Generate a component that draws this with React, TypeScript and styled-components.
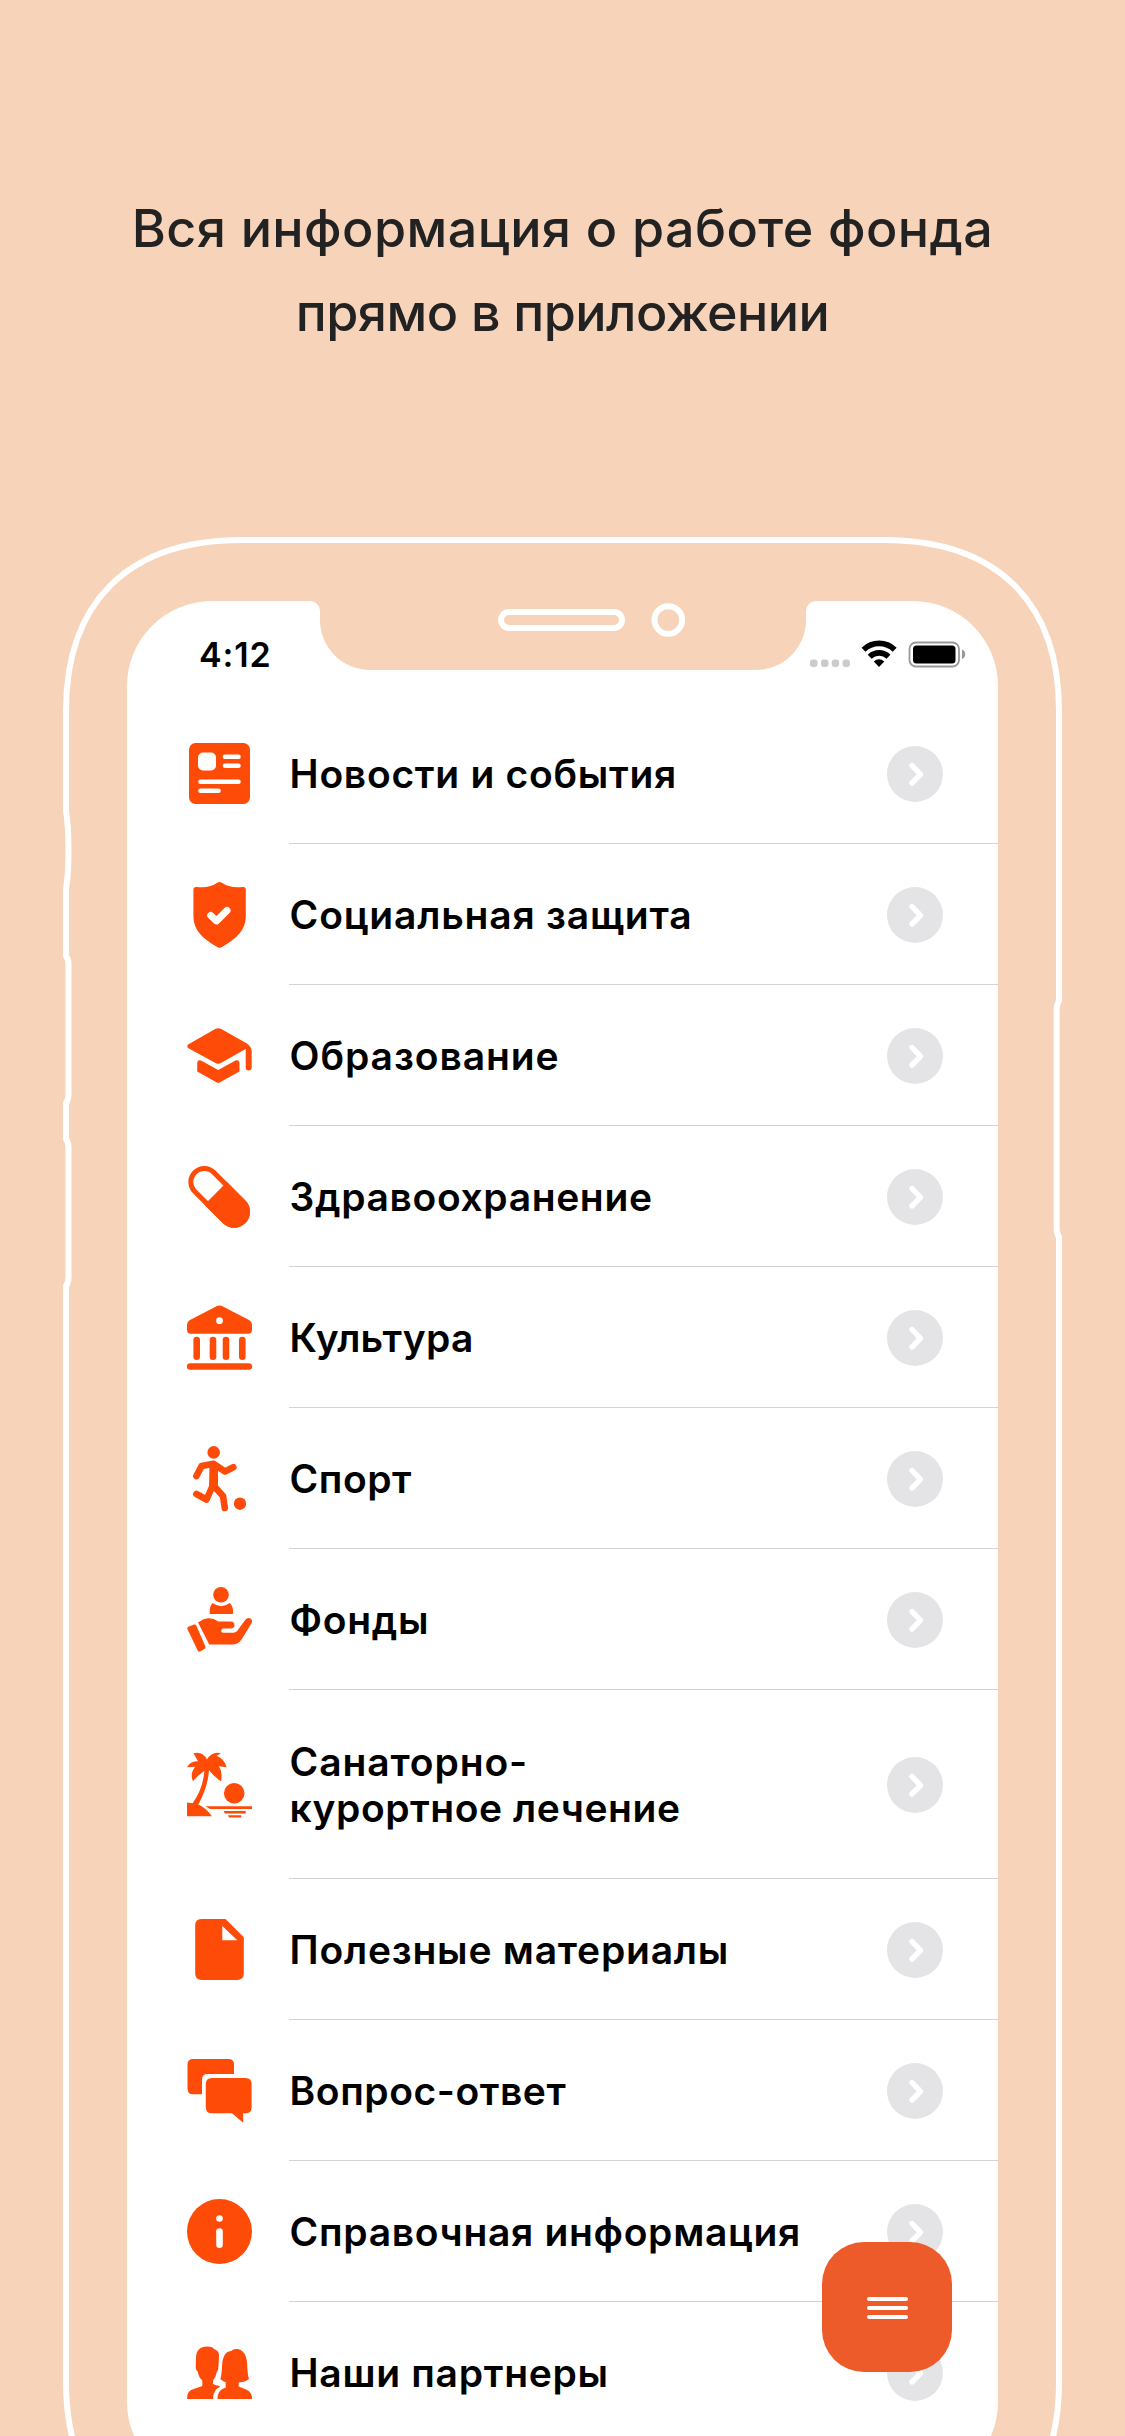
import React from "react";
import styled, { createGlobalStyle } from "styled-components";

const ORANGE = "#ff4b08";
const PEACH = "#f7d3b9";

const Global = createGlobalStyle`
  * { box-sizing: border-box; }
  html, body { margin: 0; padding: 0; background: ${PEACH}; }
`;

const Page = styled.main`
  width: 1125px;
  height: 2436px;
  overflow: hidden;
  background: ${PEACH};
  display: flex;
  flex-direction: column;
  font-family: Inter, "Liberation Sans", sans-serif;
`;

const Headline = styled.h1`
  margin: 0;
  height: 537px;
  padding-top: 187px;
  display: flex;
  flex-direction: column;
  align-items: center;
  color: #222;
  font-weight: 450;
  font-size: 52px;
  line-height: 84px;
`;

const HeadLine = styled.span<{ $spacing: number }>`
  white-space: nowrap;
  letter-spacing: ${(p) => p.$spacing}px;
`;

const Phone = styled.section`
  position: relative;
  height: 1899px;
  padding: 64px 127px 0;
`;

const Frame = styled.svg`
  position: absolute;
  inset: 0;
  pointer-events: none;
`;

const Screen = styled.div`
  position: relative;
  width: 871px;
  height: 1886px;
  background: #fff;
  border-radius: 85px;
  overflow: hidden;
`;

const Notch = styled.svg`
  position: absolute;
  left: 183px;
  top: -1px;
`;

const StatusBar = styled.header`
  height: 102px;
  padding: 35px 33px 0 72px;
  display: flex;
  justify-content: space-between;
`;

const Clock = styled.time`
  font-size: 34px;
  line-height: 38px;
  font-weight: 600;
  letter-spacing: 0.9px;
  color: #000;
`;

const List = styled.ul`
  list-style: none;
  margin: 0;
  padding: 0 0 0 60px;
`;

const Row = styled.li<{ $tall?: boolean }>`
  height: ${(p) => (p.$tall ? 189 : 141)}px;
  display: flex;
  align-items: center;
`;

const IconBox = styled.span`
  width: 102px;
  height: 66px;
  flex: none;

  svg {
    display: block;
  }
`;

const RowBody = styled.div`
  flex: 1;
  height: 100%;
  display: flex;
  align-items: center;
  justify-content: space-between;
  padding-right: 55px;
  border-bottom: 1px solid #d3d3d5;
`;

const Label = styled.span`
  display: flex;
  flex-direction: column;
  padding: 2px 0 0 0.6px;
`;

const LabelLine = styled.span<{ $spacing: number }>`
  font-size: 39px;
  line-height: 46.5px;
  font-weight: 600;
  color: #000;
  white-space: nowrap;
  letter-spacing: ${(p) => p.$spacing}px;
`;

const ChevronIcon = styled.svg`
  margin-top: 1px;
`;

const MenuButton = styled.button`
  position: absolute;
  left: 695px;
  top: 1641px;
  width: 130px;
  height: 130px;
  border: 0;
  border-radius: 42px;
  background: #ee5b2b;
  display: flex;
  flex-direction: column;
  align-items: center;
  justify-content: center;
  gap: 5px;
  padding: 2px 0 0 1px;
`;

const MenuBar = styled.i`
  width: 41px;
  height: 3.7px;
  border-radius: 2px;
  background: #fff;
`;

const Chevron = () => (
  <ChevronIcon width="56" height="56" viewBox="0 0 56 56">
    <circle cx="28" cy="28" r="28" fill="#e4e4e6" />
    <path d="M25 19.5 33.5 28.4 25 37" fill="none" stroke="#fff" strokeWidth="5.4" strokeLinecap="round" strokeLinejoin="round" />
  </ChevronIcon>
);

const line = { fill: "none", stroke: ORANGE, strokeLinecap: "round", strokeLinejoin: "round" } as const;
const white = { fill: "none", stroke: "#fff", strokeLinecap: "round", strokeLinejoin: "round" } as const;

const icons: Record<string, React.ReactNode> = {
  news: (
    <>
      <rect x="2" y="2" width="61" height="61" rx="6.5" />
      <rect x="11" y="11.5" width="18" height="18" rx="5" fill="#fff" />
      <path {...white} strokeWidth="4.6" d="M38 15.8H51.5M38 24.8H51.5M13.5 40.8H51.5M13.5 49.8H31.5" />
    </>
  ),
  shield: (
    <>
      <path d="M30.7.6Q32.6-.8 34.5.6Q43 6.7 55.5 5Q58.8 4.5 58.8 8V34C58.8 48 50 56.5 34.5 65.2Q32.6 66.4 30.7 65.2C15 56.5 6.4 48 6.4 34V8Q6.4 4.5 9.7 5Q22 6.7 30.7.6Z" />
      <path {...white} strokeWidth="7" d="M23.7 33.5 29.5 38.9 40 28.5" />
    </>
  ),
  hat: (
    <>
      <path d="M28.2 6.1Q31.2 4.4 34.2 6.1L59.5 20.2Q64.7 23.6 64.7 28.5V44.5A3 3 0 0 1 58.7 44.5V26L34.3 39.8Q31.2 41.5 28 39.8L1.5 25.3Q-1 23.3 1.5 21.3Z" />
      <path d="M10.2 40.3Q10.4 36.2 14 37.5L31.2 47.1 48.5 37.5Q52.2 36.2 52.5 40.3V48.5L33 59.3Q31.2 60.3 29.4 59.3L10.2 48.5Z" />
    </>
  ),
  pill: (
    <g transform="translate(32.2 32.9) rotate(45)">
      <rect x="-34.5" y="-13.5" width="69" height="27" rx="13.5" {...line} strokeWidth="5" />
      <path d="M-5-16H21A16 16 0 0 1 21 16H-5Z" />
    </g>
  ),
  museum: (
    <>
      <path fillRule="evenodd" d="M29.5 1.3Q32.5-.3 35.5 1.3L62.5 15.2Q65 16.7 65 20V25Q65 28.7 61.2 28.7H3.8Q0 28.7 0 25V20Q0 16.7 2.5 15.2ZM32.5 12.3A3.4 3.4 0 1 0 32.5 19.1A3.4 3.4 0 1 0 32.5 12.3Z" />
      <path {...line} strokeWidth="6.6" d="M9.7 35V51.8M26 35V51.8M39 35V51.8M55.3 35V51.8M3.2 61.5H61.8" />
    </>
  ),
  sport: (
    <>
      <circle cx="26.7" cy="6.4" r="6.3" />
      <circle cx="53" cy="57.700" r="6.200" />
      <path {...line} strokeWidth="6.600" d="M9.400 30 14.600 20 26.500 17.800 38 25.500 46.300 21.300M9.400 48 19.500 53.500 26 39 36 50 37.800 62" />
      <path d="M22.500 17H31V40L22 42Z" />
    </>
  ),
  hand: (
    <>
      <circle cx="34" cy="7.8" r="7.8" />
      <path d="M22.7 27V24Q22.7 18.5 25.8 16Q34 22.5 42.7 16Q46 19 46 24V27Z" />
      <path d="M11 35.5Q22 27.3 31.2 34.5H43.5Q47.5 34.5 47.5 38.5Q47.5 41.5 43.5 41.5H36Q34.3 41.5 34.3 43.8Q34.3 45.8 36 45.8H46Q49.5 45.8 51.5 42L58.4 32.8Q60.5 30 63.5 31.5Q66 33.3 64.4 36.5L54.7 52.2Q51 57.5 45.5 57.5H22.3Z" />
      <path d="M1.4 39.8 7 37.5Q8.5 37 9.3 38.5L18.4 59.5Q19 61 17.5 62L13 64.6Q11.5 65.2 10.8 63.7L.4 42Q-.2 40.5 1.4 39.8Z" />
    </>
  ),
  palm: (
    <>
      <path d="M20 7.5Q25-1 34 1.2L29.7 3.8Q37.5 7 39.6 15.3L32 14.3Q36 21 34 29.3Q27 25 22 18Q21 35 11.3 52.5Q18 55 25 64.3H0V50.5L5.6 51.2Q16 37 17.3 19Q11 23 6 29.3Q2.5 21 8.5 14.7L0 15.3Q3.5 8.5 11 9.2L6.5 1.3Q15.5-1 20 7.5Z" />
      <circle cx="47.2" cy="41.3" r="10.3" />
      <path d="M18.5 54.2H65V57H23ZM36.5 59H58.7V61.4H38ZM41 63.3H54.2V65.6H42Z" />
    </>
  ),
  file: <path fillRule="evenodd" d="M14.2 2H38.5L56.8 20.3V56.5Q56.8 63 50.3 63H14.7Q8.2 63 8.2 56.5V8.5Q8.2 2 14.2 2ZM35.3 9V23.3H50.3Z" />,
  chat: (
    <>
      <path d="M6 1H41.5Q47 1 47 6.5V16H20.5Q15 16 15 21.5V36.3H6Q.5 36.3.5 30.8V6.5Q.5 1 6 1Z" />
      <path d="M24.8 20H58.6Q64.6 20 64.6 26V49.3Q64.6 55.3 58.6 55.3H56.2V64.8L45 55.3H24.8Q18.8 55.3 18.8 49.3V26Q18.8 20 24.8 20Z" />
    </>
  ),
  info: (
    <>
      <circle cx="32.5" cy="32.5" r="32.5" />
      <circle cx="32.5" cy="19.5" r="3.3" fill="#fff" />
      <path {...white} strokeWidth="6.6" d="M32.5 32.5V45.8" />
    </>
  ),
  people: (
    <>
      <path d="M15.3 46V40.5Q11.5 37 10.7 31.5Q8.3 29.8 8.8 25.5L9 18Q9 6.5 20.5 6.5Q26 6.7 27 9Q32 10.5 32 16L31.5 26Q31.5 30 29.8 32Q28.8 37.5 26 40.5V44Q27 44.5 33.3 46.5Q26 50 26 59H0Q-.2 51 6 49.2Z" />
      <path d="M38.7 46V42.2Q36 41.5 33.3 39Q34.5 36 35 27C35.5 14 40 11 44.2 11Q46 8.5 50.5 9Q59.5 10.5 60.2 24.5Q60.5 35 62 39Q58.5 42 51.7 42.5V46.5L59 49.5Q65.3 52 65 59H30.5Q30.7 51.5 35 49.2L38.7 47.5Z" />
    </>
  ),
};

type Line = [text: string, spacing: number];

const items: { icon: string; lines: Line[]; tall?: boolean }[] = [
  { icon: "news", lines: [["Новости и события", 0.72]] },
  { icon: "shield", lines: [["Социальная защита", 0.8]] },
  { icon: "hat", lines: [["Образование", 0.92]] },
  { icon: "pill", lines: [["Здравоохранение", 0.63]] },
  { icon: "museum", lines: [["Культура", 0.25]] },
  { icon: "sport", lines: [["Спорт", 0.5]] },
  { icon: "hand", lines: [["Фонды", 0.7]] },
  { icon: "palm", lines: [["Санаторно-", 0.88], ["курортное лечение", 0.55]], tall: true },
  { icon: "file", lines: [["Полезные материалы", 0.77]] },
  { icon: "chat", lines: [["Вопрос-ответ", 0.55]] },
  { icon: "info", lines: [["Справочная информация", 0.68]] },
  { icon: "people", lines: [["Наши партнеры", 0.7]] },
];

const PhoneOutline = () => (
  <Frame width="1125" height="1899" viewBox="0 537 1125 1899" fill="none" stroke="#fff" strokeWidth="6">
    <path d="M562 540H883C1000 540 1059 605 1059 711V1001Q1056.6 1004 1056.6 1010V1228Q1056.6 1234 1059 1237V2382C1059 2488 1000 2553 883 2553H242C125 2553 66 2488 66 2382V1286Q68.5 1283 68.5 1277V1148Q68.5 1142 66 1139V1103Q68.5 1100 68.5 1094V965Q68.5 959 66 956V889Q68.5 875 68.5 850Q68.5 825 66 811V711C66 605 125 540 242 540Z" />
    <rect x="501" y="612" width="121" height="16" rx="8" />
    <circle cx="668.3" cy="620" r="13.8" />
  </Frame>
);

const StatusIcons = () => (
  <svg width="160" height="36" viewBox="805 636 160 36" overflow="visible">
    <g fill="#cbcbcb">
      {[810, 821, 831.7, 842.5].map((x) => (
        <rect key={x} x={x} y="659.5" width="7.5" height="7.5" rx="3" />
      ))}
    </g>
    <g fill="none" stroke="#000" strokeWidth="5.6">
      <path d="M863.5 649.7A22.5 22.5 0 0 1 894.7 649.7" />
      <path d="M869.7 656.7A13.5 13.5 0 0 1 888.5 656.7" />
    </g>
    <path d="M873.8 661.6Q879 657 884.3 661.6L879 667Z" />
    <rect x="909.5" y="642.5" width="49.5" height="24" rx="6.5" fill="none" stroke="#999" strokeWidth="1.8" />
    <rect x="913" y="645.5" width="42.5" height="18" rx="3.5" />
    <path d="M962 649.5Q965.2 650.5 965.2 654.3Q965.2 658 962 659Z" fill="#999" />
  </svg>
);

export default function App() {
  return (
    <Page>
      <Global />
      <Headline>
        <HeadLine $spacing={0.43}>Вся информация о работе фонда</HeadLine>
        <HeadLine $spacing={-0.55}>прямо в приложении</HeadLine>
      </Headline>
      <Phone>
        <Screen>
          <StatusBar>
            <Clock>4:12</Clock>
            <StatusIcons />
          </StatusBar>
          <List>
            {items.map((item) => (
              <Row key={item.icon} $tall={item.tall}>
                <IconBox>
                  <svg width="66" height="66" viewBox="0 0 66 66" fill={ORANGE} overflow="visible">
                    {icons[item.icon]}
                  </svg>
                </IconBox>
                <RowBody>
                  <Label>
                    {item.lines.map(([text, spacing]) => (
                      <LabelLine key={text} $spacing={spacing}>
                        {text}
                      </LabelLine>
                    ))}
                  </Label>
                  <Chevron />
                </RowBody>
              </Row>
            ))}
          </List>
          <Notch width="506" height="71" viewBox="0 0 506 71" fill={PEACH}>
            <path d="M0 0V1A10 10 0 0 1 10 11V21A50 50 0 0 0 60 70H446A50 50 0 0 0 496 21V11A10 10 0 0 1 506 1V0Z" />
          </Notch>
          <MenuButton aria-label="Меню">
            <MenuBar />
            <MenuBar />
            <MenuBar />
          </MenuButton>
        </Screen>
        <PhoneOutline />
      </Phone>
    </Page>
  );
}
